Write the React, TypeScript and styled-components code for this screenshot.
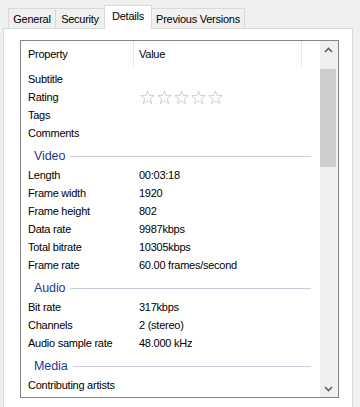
import React from 'react';
import styled, { createGlobalStyle } from 'styled-components';

const Global = createGlobalStyle`
  html, body { margin: 0; padding: 0; background: #f0f0f0; }
  body {
    font-family: "Liberation Sans", Arial, sans-serif;
    font-size: 11px;
    letter-spacing: -0.25px;
    color: #000;
  }
  * { box-sizing: border-box; }
`;

const Window = styled.div`
  width: 360px;
  height: 407px;
  overflow: hidden;
  background: #f0f0f0;
`;

const TabStrip = styled.div`
  display: flex;
  align-items: flex-end;
  height: 28px;
  padding-left: 8px;
`;

const Tab = styled.div<{ $w: number; $active?: boolean }>`
  width: ${p => p.$w}px;
  height: ${p => (p.$active ? 24 : 20)}px;
  margin-left: -1px;
  margin-bottom: ${p => (p.$active ? -1 : 0)}px;
  display: flex;
  align-items: center;
  justify-content: center;
  padding-bottom: ${p => (p.$active ? 3 : 0)}px;
  border: 1px solid #d9d9d9;
  border-bottom: none;
  background: ${p => (p.$active ? '#fff' : '#f0f0f0')};
  position: relative;
  z-index: ${p => (p.$active ? 2 : 0)};
  white-space: nowrap;
  &:first-child { margin-left: 0; }
`;

const Page = styled.div`
  margin-left: 3px;
  width: 350px;
  height: 390px;
  background: #fff;
  border: 1px solid #d9d9d9;
  padding: 11px 0 0 16px;
  position: relative;
  z-index: 1;
`;

const ListView = styled.div`
  width: 319px;
  height: 358px;
  border: 1px solid #858585;
  display: flex;
`;

const Content = styled.div`
  width: 299px;
  display: flex;
  flex-direction: column;
  overflow: hidden;
`;

const Header = styled.div`
  height: 25px;
  display: grid;
  grid-template-columns: 113px 168px;
  flex-shrink: 0;
`;

const HeaderCell = styled.div<{ $pad: number }>`
  display: flex;
  align-items: center;
  padding-left: ${p => p.$pad}px;
  padding-top: 1px;
  border-right: 1px solid #e5e5e5;
`;

const Rows = styled.div`
  padding-top: 4px;
  display: flex;
  flex-direction: column;
`;

const Row = styled.div`
  height: 18px;
  display: grid;
  grid-template-columns: 113px 1fr;
  align-items: center;
  line-height: 18px;
  flex-shrink: 0;
`;

const Label = styled.div`
  padding-left: 7px;
  white-space: nowrap;
`;

const Value = styled.div`
  padding-left: 5px;
  white-space: nowrap;
  display: flex;
  align-items: center;
`;

const Group = styled.div`
  height: 24px;
  padding: 4px 9px 0 13px;
  display: flex;
  align-items: center;
  flex-shrink: 0;
`;

const GroupTitle = styled.span`
  font-size: 12.5px;
  line-height: 20px;
  color: #1e3a8c;
  letter-spacing: -0.1px;
`;

const GroupLine = styled.div`
  flex: 1;
  height: 1px;
  margin-left: 5px;
  background: #c9cfda;
`;

const Stars = styled.div`
  display: flex;
  gap: 2px;
  margin-left: 1px;
`;

const ScrollBar = styled.div`
  width: 18px;
  background: #f0f0f0;
  display: flex;
  flex-direction: column;
`;

const ArrowButton = styled.div`
  height: 17px;
  display: flex;
  align-items: center;
  justify-content: center;
  padding-right: 2px;
`;

const Track = styled.div`
  flex: 1;
  padding-right: 2px;
`;

const Thumb = styled.div`
  margin-top: 11px;
  height: 98px;
  background: #cdcdcd;
`;

const Star = () => (
  <svg width="15" height="15" viewBox="0 0 15 15">
    <path
      d="M7.5 0.8 L9.2 5.5 L14.2 5.6 L10.3 8.6 L11.7 13.6 L7.5 10.7 L3.3 13.6 L4.7 8.6 L0.8 5.6 L5.8 5.5 Z"
      fill="#fff"
      stroke="#cbcbcb"
      strokeWidth="0.9"
      strokeLinejoin="round"
    />
  </svg>
);

const Chevron = ({ up }: { up?: boolean }) => (
  <svg width="9" height="6" viewBox="0 0 9 6">
    <path
      d={up ? 'M1 5 L4.5 1.5 L8 5' : 'M1 1 L4.5 4.5 L8 1'}
      fill="none"
      stroke="#606060"
      strokeWidth="1.6"
    />
  </svg>
);

type Item =
  | { kind: 'row'; label: string; value?: string; stars?: boolean }
  | { kind: 'group'; title: string };

const items: Item[] = [
  { kind: 'row', label: 'Subtitle' },
  { kind: 'row', label: 'Rating', stars: true },
  { kind: 'row', label: 'Tags' },
  { kind: 'row', label: 'Comments' },
  { kind: 'group', title: 'Video' },
  { kind: 'row', label: 'Length', value: '00:03:18' },
  { kind: 'row', label: 'Frame width', value: '1920' },
  { kind: 'row', label: 'Frame height', value: '802' },
  { kind: 'row', label: 'Data rate', value: '9987kbps' },
  { kind: 'row', label: 'Total bitrate', value: '10305kbps' },
  { kind: 'row', label: 'Frame rate', value: '60.00 frames/second' },
  { kind: 'group', title: 'Audio' },
  { kind: 'row', label: 'Bit rate', value: '317kbps' },
  { kind: 'row', label: 'Channels', value: '2 (stereo)' },
  { kind: 'row', label: 'Audio sample rate', value: '48.000 kHz' },
  { kind: 'group', title: 'Media' },
  { kind: 'row', label: 'Contributing artists' },
];

export default function App() {
  return (
    <Window>
      <Global />
      <TabStrip>
        <Tab $w={48}>General</Tab>
        <Tab $w={50}>Security</Tab>
        <Tab $w={48} $active>Details</Tab>
        <Tab $w={94}>Previous Versions</Tab>
      </TabStrip>
      <Page>
        <ListView>
          <Content>
            <Header>
              <HeaderCell $pad={7}>Property</HeaderCell>
              <HeaderCell $pad={5}>Value</HeaderCell>
            </Header>
            <Rows>
              {items.map((it, i) =>
                it.kind === 'group' ? (
                  <Group key={i}>
                    <GroupTitle>{it.title}</GroupTitle>
                    <GroupLine />
                  </Group>
                ) : (
                  <Row key={i}>
                    <Label>{it.label}</Label>
                    <Value>
                      {it.stars ? (
                        <Stars>
                          {[0, 1, 2, 3, 4].map(s => (
                            <Star key={s} />
                          ))}
                        </Stars>
                      ) : (
                        it.value
                      )}
                    </Value>
                  </Row>
                )
              )}
            </Rows>
          </Content>
          <ScrollBar>
            <ArrowButton>
              <Chevron up />
            </ArrowButton>
            <Track>
              <Thumb />
            </Track>
            <ArrowButton>
              <Chevron />
            </ArrowButton>
          </ScrollBar>
        </ListView>
      </Page>
    </Window>
  );
}
